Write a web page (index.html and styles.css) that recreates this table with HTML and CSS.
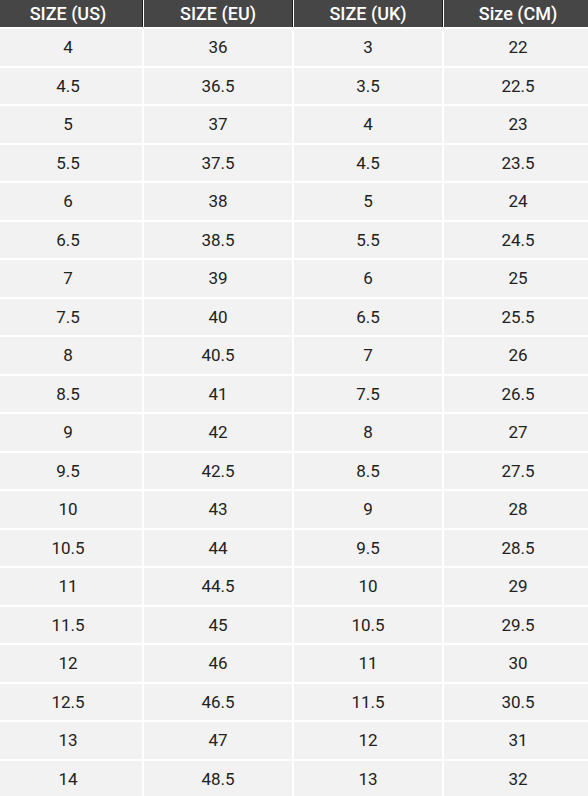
FILE: index.html
```html
<!DOCTYPE html>
<html>
<head>
<meta charset="utf-8">
<link rel="stylesheet" href="styles.css">
</head>
<body>
<div class="wrap">
<div class="chart">
<div class="h">SIZE (US)</div><div class="h">SIZE (EU)</div><div class="h">SIZE (UK)</div><div class="h">Size (CM)</div>
<div class="c">4</div><div class="c">36</div><div class="c">3</div><div class="c">22</div>
<div class="c">4.5</div><div class="c">36.5</div><div class="c">3.5</div><div class="c">22.5</div>
<div class="c">5</div><div class="c">37</div><div class="c">4</div><div class="c">23</div>
<div class="c">5.5</div><div class="c">37.5</div><div class="c">4.5</div><div class="c">23.5</div>
<div class="c">6</div><div class="c">38</div><div class="c">5</div><div class="c">24</div>
<div class="c">6.5</div><div class="c">38.5</div><div class="c">5.5</div><div class="c">24.5</div>
<div class="c">7</div><div class="c">39</div><div class="c">6</div><div class="c">25</div>
<div class="c">7.5</div><div class="c">40</div><div class="c">6.5</div><div class="c">25.5</div>
<div class="c">8</div><div class="c">40.5</div><div class="c">7</div><div class="c">26</div>
<div class="c">8.5</div><div class="c">41</div><div class="c">7.5</div><div class="c">26.5</div>
<div class="c">9</div><div class="c">42</div><div class="c">8</div><div class="c">27</div>
<div class="c">9.5</div><div class="c">42.5</div><div class="c">8.5</div><div class="c">27.5</div>
<div class="c">10</div><div class="c">43</div><div class="c">9</div><div class="c">28</div>
<div class="c">10.5</div><div class="c">44</div><div class="c">9.5</div><div class="c">28.5</div>
<div class="c">11</div><div class="c">44.5</div><div class="c">10</div><div class="c">29</div>
<div class="c">11.5</div><div class="c">45</div><div class="c">10.5</div><div class="c">29.5</div>
<div class="c">12</div><div class="c">46</div><div class="c">11</div><div class="c">30</div>
<div class="c">12.5</div><div class="c">46.5</div><div class="c">11.5</div><div class="c">30.5</div>
<div class="c">13</div><div class="c">47</div><div class="c">12</div><div class="c">31</div>
<div class="c">14</div><div class="c">48.5</div><div class="c">13</div><div class="c">32</div>
</div>
</div>
</body>
</html>
```
FILE: styles.css
```css
html, body {
  margin: 0;
  padding: 0;
  background: #ffffff;
}
.wrap {
  width: 588px;
  height: 796px;
  overflow: hidden;
}
.chart {
  display: grid;
  grid-template-columns: repeat(4, 148px);
  grid-template-rows: 27px repeat(20, 36.5px);
  gap: 2px;
  margin-left: -6px;
  width: 598px;
  background: #ffffff;
  font-family: Roboto, "Liberation Sans", sans-serif;
}
.h {
  background: #464646;
  color: #ffffff;
  font-size: 18px;
  font-weight: 500;
  display: flex;
  align-items: center;
  justify-content: center;
  box-shadow: 1px 0 0 #1a1a1a;
}
.c {
  background: #f2f2f2;
  color: #222222;
  font-size: 17px;
  display: flex;
  align-items: center;
  justify-content: center;
}
```
